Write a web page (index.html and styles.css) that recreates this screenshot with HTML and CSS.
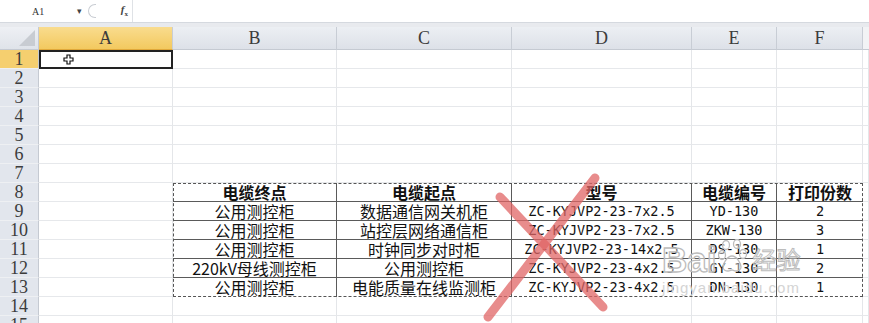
FILE: index.html
```html
<!DOCTYPE html>
<html>
<head>
  <title>电缆清单</title>
  <link rel="stylesheet" href="styles.css">
</head>
<body>
<div class="formula-bar">
  <div class="name-box">
    <span class="cell-ref">A1</span>
    <span class="drop">&#9662;</span>
  </div>
  <div class="grip"></div>
  <div class="fx"><i>f</i><sub>x</sub></div>
  <div class="formula-input"></div>
</div>
<div class="band"></div>

<div class="sheet">
  <!-- column headers -->
  <div class="corner"><span class="tri"></span></div>
  <div class="col-head selected">A</div>
  <div class="col-head">B</div>
  <div class="col-head">C</div>
  <div class="col-head">D</div>
  <div class="col-head">E</div>
  <div class="col-head">F</div>
  <div class="col-head last"></div>

  <!-- copied table, rows 8-13 -->
  <div class="cable-table">
    <div class="tc th">电缆终点</div>
    <div class="tc th">电缆起点</div>
    <div class="tc th">型号</div>
    <div class="tc th">电缆编号</div>
    <div class="tc th">打印份数</div>

    <div class="tc">公用测控柜</div>
    <div class="tc">数据通信网关机柜</div>
    <div class="tc mono">ZC-KYJVP2-23-7x2.5</div>
    <div class="tc mono">YD-130</div>
    <div class="tc mono">2</div>

    <div class="tc">公用测控柜</div>
    <div class="tc">站控层网络通信柜</div>
    <div class="tc mono">ZC-KYJVP2-23-7x2.5</div>
    <div class="tc mono">ZKW-130</div>
    <div class="tc mono">3</div>

    <div class="tc">公用测控柜</div>
    <div class="tc">时钟同步对时柜</div>
    <div class="tc mono">ZC-KYJVP2-23-14x2.5</div>
    <div class="tc mono">DS-130</div>
    <div class="tc mono">1</div>

    <div class="tc">220kV母线测控柜</div>
    <div class="tc">公用测控柜</div>
    <div class="tc mono">ZC-KYJVP2-23-4x2.5</div>
    <div class="tc mono">GY-130</div>
    <div class="tc mono">2</div>

    <div class="tc">公用测控柜</div>
    <div class="tc">电能质量在线监测柜</div>
    <div class="tc mono">ZC-KYJVP2-23-4x2.5</div>
    <div class="tc mono">DN-130</div>
    <div class="tc mono">1</div>
  </div>

  <!-- row 1 -->
  <div class="row-head selected">1</div>
  <div class="cell active">
    <svg class="cursor" width="11" height="11" viewBox="0 0 11 11">
      <path d="M4 1h3v3h3v3H7v3H4V7H1V4h3z" fill="#fff" stroke="#111" stroke-width="1.2"/>
    </svg>
  </div>
  <div class="cell"></div><div class="cell"></div><div class="cell"></div>
  <div class="cell"></div><div class="cell"></div><div class="cell"></div>

  <div class="row-head">2</div>
  <div class="cell"></div><div class="cell"></div><div class="cell"></div><div class="cell"></div>
  <div class="cell"></div><div class="cell"></div><div class="cell"></div>

  <div class="row-head">3</div>
  <div class="cell"></div><div class="cell"></div><div class="cell"></div><div class="cell"></div>
  <div class="cell"></div><div class="cell"></div><div class="cell"></div>

  <div class="row-head">4</div>
  <div class="cell"></div><div class="cell"></div><div class="cell"></div><div class="cell"></div>
  <div class="cell"></div><div class="cell"></div><div class="cell"></div>

  <div class="row-head">5</div>
  <div class="cell"></div><div class="cell"></div><div class="cell"></div><div class="cell"></div>
  <div class="cell"></div><div class="cell"></div><div class="cell"></div>

  <div class="row-head">6</div>
  <div class="cell"></div><div class="cell"></div><div class="cell"></div><div class="cell"></div>
  <div class="cell"></div><div class="cell"></div><div class="cell"></div>

  <div class="row-head">7</div>
  <div class="cell"></div><div class="cell"></div><div class="cell"></div><div class="cell"></div>
  <div class="cell"></div><div class="cell"></div><div class="cell"></div>

  <div class="row-head">8</div><div class="cell"></div><div class="cell"></div>
  <div class="row-head">9</div><div class="cell"></div><div class="cell"></div>
  <div class="row-head">10</div><div class="cell"></div><div class="cell"></div>
  <div class="row-head">11</div><div class="cell"></div><div class="cell"></div>
  <div class="row-head">12</div><div class="cell"></div><div class="cell"></div>
  <div class="row-head">13</div><div class="cell"></div><div class="cell"></div>

  <div class="row-head">14</div>
  <div class="cell"></div><div class="cell"></div><div class="cell"></div><div class="cell"></div>
  <div class="cell"></div><div class="cell"></div><div class="cell"></div>

  <div class="row-head">15</div>
  <div class="cell"></div><div class="cell"></div><div class="cell"></div><div class="cell"></div>
  <div class="cell"></div><div class="cell"></div><div class="cell"></div>
</div>

<!-- red cross drawn over the model column -->
<svg class="red-cross" width="869" height="323" viewBox="0 0 869 323">
  <line x1="500" y1="197" x2="603" y2="307" />
  <line x1="595" y1="178" x2="488" y2="317" />
</svg>

<!-- watermark -->
<div class="watermark">
  <div class="wm-logo">
    <span class="wm-bai">Bai</span>
    <svg class="wm-paw" width="30" height="34" viewBox="0 0 30 34">
      <ellipse cx="8" cy="6" rx="3.5" ry="4.5"/>
      <ellipse cx="19" cy="5" rx="3.5" ry="4.5"/>
      <ellipse cx="4" cy="16" rx="3.5" ry="4.5"/>
      <ellipse cx="25" cy="15" rx="3.5" ry="4.5"/>
      <path d="M14 17c-5 0-9 8-9 11s3 4 5 4 3-1 4-1 2 1 4 1 5-1 5-4-4-11-9-11z"/>
    </svg>
    <span class="wm-jy">经验</span>
  </div>
  <div class="wm-url">jingyan.baidu.com</div>
</div>
</body>
</html>
```
FILE: styles.css
```css
* {
    box-sizing: border-box;
}

body {
    margin: 0;
    width: 869px;
    height: 323px;
    overflow: hidden;
    background-color: #ffffff;
    font-family: "Noto Sans CJK SC", "Noto Sans", sans-serif;
    position: relative;
}

/* formula bar */
.formula-bar {
    display: flex;
    align-items: center;
    height: 23px;
    background-color: #ffffff;
    border-bottom: 1px solid #d5d9df;
}

.name-box {
    width: 86px;
    display: flex;
    align-items: center;
    justify-content: space-between;
    padding: 0 4px 0 32px;
    font-family: "Liberation Serif", serif;
    font-size: 10px;
    color: #333333;
}

.drop {
    font-size: 9px;
    color: #444444;
}

.grip {
    width: 8px;
    height: 14px;
    border: 1px solid #c9cdd3;
    border-right: none;
    border-radius: 7px 0 0 7px;
    margin-left: 2px;
}

.fx {
    width: 36px;
    text-align: right;
    padding-right: 4px;
    font-family: "Liberation Serif", serif;
    font-size: 11px;
    font-weight: bold;
    color: #444444;
}

.fx sub {
    font-size: 7px;
}

.formula-input {
    flex: 1;
    height: 100%;
    border-left: 1px solid #dfe2e6;
}

.band {
    height: 4px;
    background-color: #e8eaee;
}

/* sheet grid */
.sheet {
    display: grid;
    grid-template-columns: 39px 134px 164px 175px 180px 85px 86px 1fr;
    grid-template-rows: 23px repeat(15, 19px);
}

.corner {
    background: linear-gradient(#eef0f4, #dfe3e9);
    border-right: 1px solid #c5cad2;
    border-bottom: 1px solid #c5cad2;
    position: relative;
}

.tri {
    position: absolute;
    right: 3px;
    bottom: 3px;
    width: 0;
    height: 0;
    border-left: 16px solid transparent;
    border-bottom: 16px solid #c8ccd2;
}

.col-head {
    background: linear-gradient(#eceff3, #dde1e8);
    border-right: 1px solid #c8cdd5;
    border-bottom: 1px solid #c5cad2;
    font-family: "Liberation Serif", serif;
    font-size: 18px;
    color: #3c3c3c;
    text-align: center;
    line-height: 22px;
}

.col-head.selected {
    background: linear-gradient(#f9dc8e, #f3c95f);
    border-bottom: 1px solid #e0a83a;
}

.col-head.last {
    background: #f2f3f5;
    border-right: none;
}

.row-head {
    background-color: #e2e6ed;
    border-right: 1px solid #c5cad2;
    border-bottom: 1px solid #eef0f3;
    font-family: "Liberation Serif", serif;
    font-size: 18px;
    color: #3c3c3c;
    text-align: center;
    line-height: 18px;
}

.row-head.selected {
    background-color: #f5cf6f;
}

.cell {
    border-right: 1px solid #e4e6e9;
    border-bottom: 1px solid #e6e8eb;
}

.cell.active {
    border: 2px solid #222222;
    display: flex;
    align-items: center;
    padding-left: 22px;
}

/* copied table */
.cable-table {
    grid-column: 3 / 8;
    grid-row: 9 / 15;
    display: grid;
    grid-template-columns: 164px 175px 180px 85px 86px;
    grid-template-rows: repeat(6, 19px);
    outline: 1px dashed #555555;
    outline-offset: -1px;
}

.tc {
    border-right: 1px solid #5a5a5a;
    border-bottom: 1px solid #5a5a5a;
    font-size: 16px;
    line-height: 18px;
    text-align: center;
    color: #111111;
    white-space: nowrap;
}

.tc:nth-child(5n) {
    border-right: none;
}

.tc:nth-last-child(-n+5) {
    border-bottom: none;
}

.th {
    font-weight: bold;
}

.mono {
    font-family: "DejaVu Sans Mono", monospace;
    font-size: 13.5px;
    line-height: 18px;
}

/* overlays */
.red-cross {
    position: absolute;
    left: 0;
    top: 0;
    pointer-events: none;
}

.red-cross line {
    stroke: #e06666;
    stroke-opacity: 0.75;
    stroke-width: 9;
    stroke-linecap: round;
}

.watermark {
    position: absolute;
    left: 662px;
    top: 241px;
    pointer-events: none;
}

.wm-logo {
    display: flex;
    align-items: center;
    height: 36px;
}

.wm-bai {
    font-family: "Liberation Sans", sans-serif;
    font-size: 35px;
    font-weight: bold;
    line-height: 35px;
    color: rgba(255, 255, 255, 0.45);
    -webkit-text-stroke: 1.3px #bcbcbc;
}

.wm-paw {
    margin: 0 4px 6px 2px;
}

.wm-paw ellipse,
.wm-paw path {
    fill: rgba(255, 255, 255, 0.45);
    stroke: #bcbcbc;
    stroke-width: 1.3;
}

.wm-jy {
    font-size: 24px;
    line-height: 28px;
    color: rgba(255, 255, 255, 0.45);
    -webkit-text-stroke: 1px #bcbcbc;
}

.wm-url {
    font-family: "Liberation Sans", sans-serif;
    font-size: 15px;
    letter-spacing: 1px;
    line-height: 17px;
    color: #d4d4d4;
    margin-top: 2px;
}
```
